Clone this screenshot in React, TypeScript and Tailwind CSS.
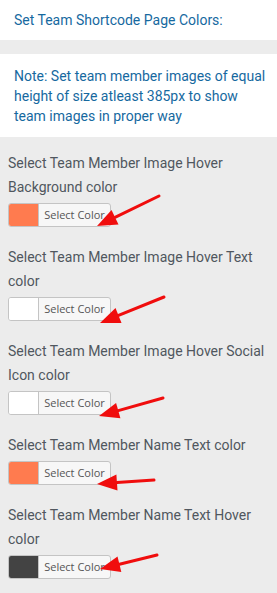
import React from "react";

type Field = { label: string; swatch: string };

const fields: Field[] = [
    { label: "Select Team Member Image Hover Background color", swatch: "bg-[#ff7b4f]" },
    { label: "Select Team Member Image Hover Text color", swatch: "bg-white" },
    { label: "Select Team Member Image Hover Social Icon color", swatch: "bg-white" },
    { label: "Select Team Member Name Text color", swatch: "bg-[#ff7b4f]" },
    { label: "Select Team Member Name Text Hover color", swatch: "bg-[#434343]" },
];

// red annotation arrows: [tailX, tailY, tipX, tipY]
const arrows: [number, number, number, number][] = [
    [159, 196, 97, 226],
    [164, 297, 100, 323],
    [163, 398, 99, 416],
    [154, 480, 97, 484],
    [157, 555, 100, 569],
];

function Arrow({ a }: { a: [number, number, number, number] }) {
    const [x1, y1, x2, y2] = a;
    const ang = Math.atan2(y2 - y1, x2 - x1);
    const len = 20;
    const w = 8;
    const bx = x2 - Math.cos(ang) * len;
    const by = y2 - Math.sin(ang) * len;
    const px = -Math.sin(ang) * w;
    const py = Math.cos(ang) * w;
    return (
        <g>
            <line x1={x1} y1={y1} x2={bx} y2={by} stroke="#f00d0d" strokeWidth={3} strokeLinecap="round" />
            <polygon points={`${x2},${y2} ${bx + px},${by + py} ${bx - px},${by - py}`} fill="#f00d0d" />
        </g>
    );
}

export default function App() {
    return (
        <div className="relative w-[277px] h-[593px] bg-[#ececec] font-['Roboto',sans-serif] overflow-hidden">
            <div className="bg-white px-[14px] py-[10px] text-[14px] leading-[20px] text-[#16699f]">
                Set Team Shortcode Page Colors:
            </div>
            <div className="h-[14px]" />
            <div className="bg-white pl-[14px] pr-2 pt-[12px] pb-[11px] text-[14px] leading-[20px] text-[#16699f]">
                Note: Set team member images of equal height of size atleast 385px to show team images in proper way
            </div>
            <div className="flex flex-col gap-[18px] pl-2 pr-1 pt-[14px]">
                {fields.map((f) => (
                    <div key={f.label} className="flex flex-col gap-1">
                        <div className="text-[14px] leading-[24px] text-[#50575e]">{f.label}</div>
                        <div className="flex h-[24px] w-[103px] rounded-[3px] border border-[#c4c4c4] overflow-hidden bg-[#f7f7f7]">
                            <div className={`w-[30px] border-r border-[#c4c4c4] ${f.swatch}`} />
                            <div className="flex-1 flex items-center justify-center text-[11px] text-[#555] font-['Open_Sans',sans-serif]">
                                Select Color
                            </div>
                        </div>
                    </div>
                ))}
            </div>
            <svg className="absolute inset-0 pointer-events-none" width={277} height={593}>
                {arrows.map((a, i) => (
                    <Arrow key={i} a={a} />
                ))}
            </svg>
        </div>
    );
}
